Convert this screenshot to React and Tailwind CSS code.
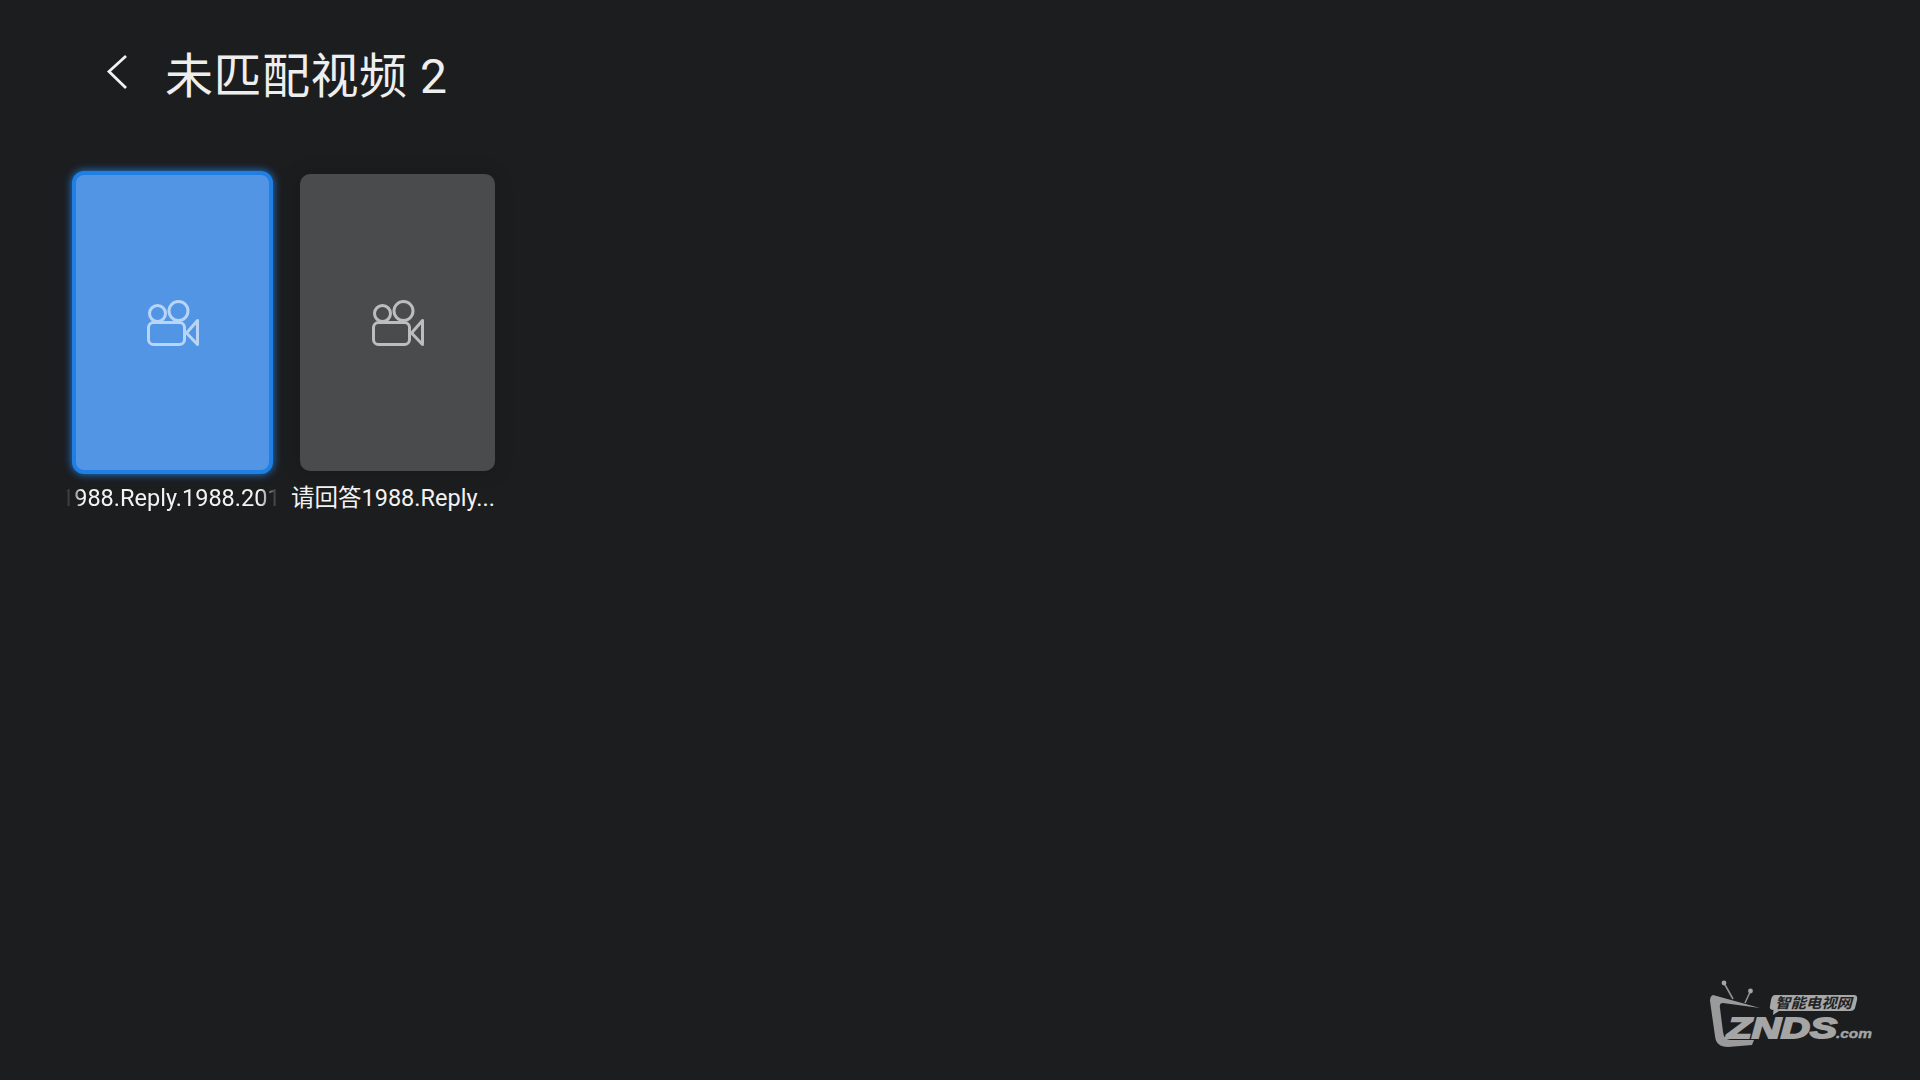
const FONT = 'font-["Roboto","Noto_Sans_CJK_SC",sans-serif]';

function BackIcon() {
  return (
    <svg viewBox="0 0 24 36" fill="none" stroke="#f2f2f2" strokeWidth="2.800" className="h-[36px] w-[24px]">
      <path d="M21 2 4 17.500 21 34" />
    </svg>
  );
}

function CameraIcon({ className }) {
  return (
    <svg
      viewBox="0 0 56 56"
      fill="none"
      stroke="currentColor"
      strokeWidth="3"
      strokeLinejoin="round"
      className={className}
    >
      <circle cx="12.5" cy="18.5" r="8" />
      <circle cx="33.5" cy="16" r="9.500" />
      <rect x="3.5" y="27.5" width="36" height="22" rx="5" />
      <path d="M41.5 38 52.5 25.5V49.5Z" />
    </svg>
  );
}

function Logo() {
  return (
    <svg viewBox="0 0 200 90" className="absolute right-[30px] bottom-[20px] h-[90px] w-[200px]">
      {/* antennas */}
      <path d="M34 13 43 29M60.500 21 55 33" stroke="#8f8f8f" strokeWidth="1.600" />
      <circle cx="34" cy="13" r="2.400" fill="#a5a5a5" />
      <circle cx="60.500" cy="21" r="2.400" fill="#a5a5a5" />
      {/* tv body */}
      <path
        d="M23 25 70 38 33 33Q29 33 30 38L33 62Q34 70 41 70L64 70 62 75 38 77Q26 77 25 66L20 31Q20 26 23 25Z"
        fill="#9a9a9a"
      />
      {/* bubble */}
      <path
        d="M85 25H164Q168 25 167 30L165 38Q164 41 160 41H89L83 45 83.500 40Q79 40 80 36L81 30Q82 25 85 25Z"
        fill="#a8a8a8"
      />
      <text
        x="85"
        y="38"
        textLength="77"
        lengthAdjust="spacingAndGlyphs"
        fontFamily="'Noto Sans CJK SC', sans-serif"
        fontSize="14"
        fontWeight="700"
        fontStyle="italic"
        fill="#232426"
      >
        智能电视网
      </text>
      <text
        x="37"
        y="68"
        textLength="110"
        lengthAdjust="spacingAndGlyphs"
        fontFamily="'Liberation Sans', sans-serif"
        fontSize="29"
        fontWeight="700"
        fontStyle="italic"
        fill="#a5a5a5"
        stroke="#a5a5a5"
        strokeWidth="1.800"
      >
        ZNDS
      </text>
      <text
        x="146"
        y="68"
        textLength="36"
        lengthAdjust="spacingAndGlyphs"
        fontFamily="'Liberation Sans', sans-serif"
        fontSize="13"
        fontWeight="700"
        fontStyle="italic"
        fill="#a5a5a5"
        stroke="#a5a5a5"
        strokeWidth="0.400"
      >
        .com
      </text>
    </svg>
  );
}

export default function App() {
  return (
    <div className={`relative h-screen w-full overflow-hidden bg-[#1c1d1f] ${FONT}`}>
      {/* Header */}
      <div className="flex h-[150px] items-center pl-[105px]">
        <div className="-mt-[6px]">
          <BackIcon />
        </div>
        <h1 className="mt-[4px] ml-[36px] text-[48px] leading-none font-normal tracking-[0.5px] text-[#eeeeee]">
          未匹配视频 2
        </h1>
      </div>

      {/* Video list */}
      <div className="mt-[24px] flex gap-[30px] pl-[75px]">
        <div className="w-[195px]">
          <div className="-m-[3px] flex h-[303px] w-[201px] items-center justify-center rounded-[12px] border-4 border-[#1f7fe3] bg-[#5295e5] shadow-[0_0_8px_#1f7fe3]">
            <CameraIcon className="h-[56px] w-[56px] text-[#b9d5f6]" />
          </div>
          <div className="mt-[9px] -ml-[9px] w-[212px] overflow-hidden text-[23.5px] leading-[36px] whitespace-nowrap text-[#f2f2f2] [mask-image:linear-gradient(to_right,transparent,black_16px,black_194px,transparent)]">
            <span className="-ml-[5px] inline-block">1988.Reply.1988.2018</span>
          </div>
        </div>

        <div className="w-[195px]">
          <div className="flex h-[297px] w-[195px] items-center justify-center rounded-[10px] bg-[#4a4b4d] shadow-[0_0_20px_rgba(0,0,0,0.15)]">
            <CameraIcon className="h-[56px] w-[56px] text-[#bdbdbe]" />
          </div>
          <div className="mt-[9px] -ml-[9px] w-[212px] text-[23.5px] leading-[36px] whitespace-nowrap text-[#f2f2f2]">
            请回答1988.Reply...
          </div>
        </div>
      </div>

      <Logo />
    </div>
  );
}
